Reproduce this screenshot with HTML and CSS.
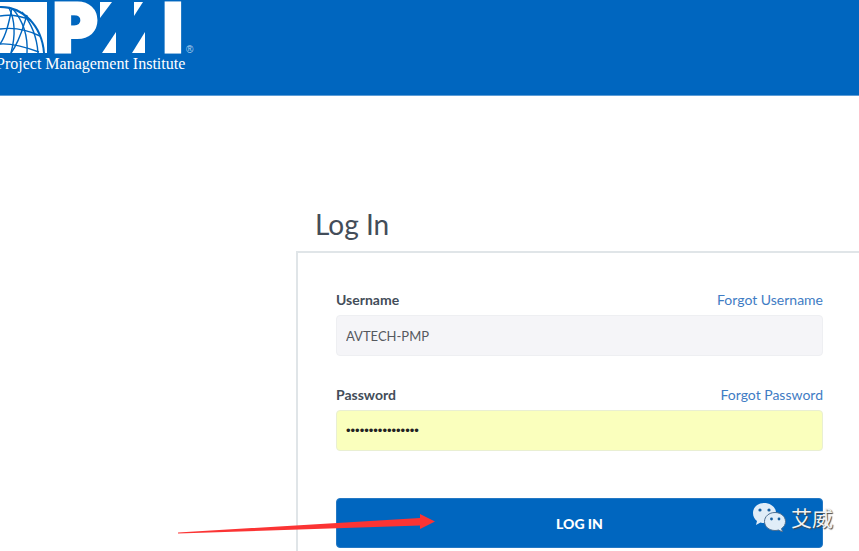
FILE: index.html
```html
<!DOCTYPE html>
<html lang="en">
<head>
  <meta charset="UTF-8" />
  <meta name="viewport" content="width=device-width, initial-scale=1.0"/>
  <title>Log In | Project Management Institute</title>
  <link rel="stylesheet" href="styles.css">
</head>
<body>

<header class="site-header">
  <a class="logo" href="#" aria-label="Project Management Institute">
    <svg class="logo-mark" width="196" height="54" viewBox="0 0 196 54">
      <!-- globe -->
      <path fill="#fff" d="M0 2h47v51H0z"/>
      <path fill="#0066bf" d="M0 6C22 5 43 24 45 53H0z"/>
      <path fill="#fff" d="M0 8C21 8 41 25 43 53H0z"/>
      <g fill="none" stroke="#0066bf" stroke-width="1.4">
        <path d="M9 8C16 22 15 38 11 53"/>
        <path d="M12 8C9 22 6 36 0 44"/>
        <path d="M13 9C23 21 28 37 27 53"/>
        <path d="M27 15C23 27 20 41 11 53"/>
        <path d="M22 12C32 24 37 38 38 53"/>
        <path d="M0 16C11 14 21 16 31 20"/>
        <path d="M0 29C14 27 28 30 40 36"/>
        <path d="M0 44C12 43 28 48 39 52"/>
      </g>
      <text class="logo-letter" x="53" y="52">P</text>
      <g fill="#fff">
        <path d="M100 2h12L100 18z"/>
        <path d="M116 32v21h-14z"/>
        <path d="M134 2h9L134 16z"/>
        <path d="M145 32v21h-13z"/>
      </g>
      <text class="logo-letter" x="163" y="52">I</text>
      <text class="logo-reg" x="186" y="53">®</text>
    </svg>
    <span class="logo-name">Project Management Institute</span>
  </a>
</header>

<main class="login">
  <h1 class="login-title">Log In</h1>
  <form class="login-card">
    <div class="field">
      <div class="field-head">
        <label for="username">Username</label>
        <a href="#">Forgot Username</a>
      </div>
      <input type="text" id="username" value="AVTECH-PMP" />
    </div>
    <div class="field">
      <div class="field-head">
        <label for="password">Password</label>
        <a href="#">Forgot Password</a>
      </div>
      <input type="password" id="password" class="autofilled" value="avtechpmp1234567" />
    </div>
    <div class="submit">
      <button type="button">LOG IN</button>
      <svg class="arrow" width="260" height="24" viewBox="0 0 260 24" aria-hidden="true">
        <path fill="#fb3434" d="M0 19.500L242 5V1L257 8.500L242 16V12.500L0 20.500z"/>
      </svg>
      <div class="watermark">
        <svg width="34" height="30" viewBox="0 0 34 30" aria-hidden="true">
          <path fill="#e0edf8" d="M12 1C5.500 1 1 5.500 1 11c0 3.500 1.500 6 4 8l-1 4 4.500-2.500c1.500.5 3 .5 4.500.5C19 21 24 17 24 11S18.500 1 12 1z"/>
          <path fill="#e0edf8" stroke="#4d6f91" d="M23 10.500c-6 0-10.500 4-10.500 9s4.500 9 10.500 9c1.500 0 2.500-.2 3.500-.5L30.500 30l-1-3.500c2.500-1.500 4-4 4-7 0-5-4.500-9-10.500-9z"/>
          <g fill="#165f9f">
            <circle cx="8" cy="8" r="1.600"/>
            <circle cx="17" cy="8" r="1.600"/>
            <circle cx="19.500" cy="17" r="1.400"/>
            <circle cx="27" cy="17" r="1.400"/>
          </g>
        </svg>
        <span lang="zh">艾威</span>
      </div>
    </div>
  </form>
</main>

</body>
</html>
```
FILE: styles.css
```css
* {
  box-sizing: border-box;
}
body {
  margin: 0;
  height: 100vh;
  display: flex;
  flex-direction: column;
  overflow: hidden;
  background: #fff;
  color: #434d59;
  font-family: Lato, 'Open Sans', sans-serif;
  font-size: 14px;
}
a {
  color: #3f7cc4;
  text-decoration: none;
}
.site-header {
  height: 96px;
  flex: none;
  background: #0066bf;
  border-bottom: 1px solid #5c9cd6;
}
.logo {
  display: block;
  color: #fff;
}
.logo-mark {
  display: block;
}
.logo-letter {
  font-family: Inter, sans-serif;
  font-size: 68px;
  font-weight: 900;
  fill: #fff;
  stroke: #fff;
  stroke-width: 3px;
}
.logo-reg {
  font-family: 'Liberation Sans', sans-serif;
  font-size: 10px;
  fill: #b5d3ee;
}
.logo-name {
  display: block;
  margin-left: -4px;
  font-family: 'Liberation Serif', serif;
  font-size: 16px;
  line-height: 20px;
  white-space: nowrap;
}
.login {
  flex: 1;
  display: flex;
  flex-direction: column;
  padding: 108px 0 0 296px;
}
.login-title {
  margin: 0;
  padding-left: 19px;
  font-size: 28px;
  font-weight: 400;
  line-height: 40px;
}
.login-card {
  flex: 1;
  margin-top: 7px;
  padding: 38px 36px 0 38px;
  border: 2px solid #e0e5e8;
  border-width: 2px 0 0 2px;
}
.field {
  margin-bottom: 30px;
}
.field-head {
  display: flex;
  justify-content: space-between;
  margin-bottom: 6px;
  line-height: 18px;
}
.field-head label {
  font-weight: 700;
}
.field input {
  display: block;
  width: 100%;
  height: 41px;
  padding: 0 9px;
  border: 1px solid #eeeff2;
  border-radius: 4px;
  background: #f5f5f8;
  color: #55595f;
  font-family: inherit;
  font-size: 13px;
}
.field .autofilled {
  border-color: #e9efd3;
  background: #faffbd;
  color: #222;
  font-family: 'Liberation Sans', sans-serif;
}
.submit {
  position: relative;
  margin-top: 47px;
}
.submit button {
  width: 100%;
  height: 50px;
  border: 1px solid #2478c4;
  border-radius: 4px;
  background: #0066bf;
  color: #fff;
  font-family: inherit;
  font-size: 14px;
  font-weight: 900;
  cursor: pointer;
}
.arrow {
  position: absolute;
  left: -158px;
  top: 15px;
}
.watermark {
  position: absolute;
  right: -10px;
  top: 3px;
  display: flex;
  align-items: center;
  gap: 5px;
  color: #f0f3f5;
  font-family: 'Noto Sans CJK SC', sans-serif;
  font-size: 21px;
  line-height: 32px;
  text-shadow: 1px 1px 1px #444;
}
```
